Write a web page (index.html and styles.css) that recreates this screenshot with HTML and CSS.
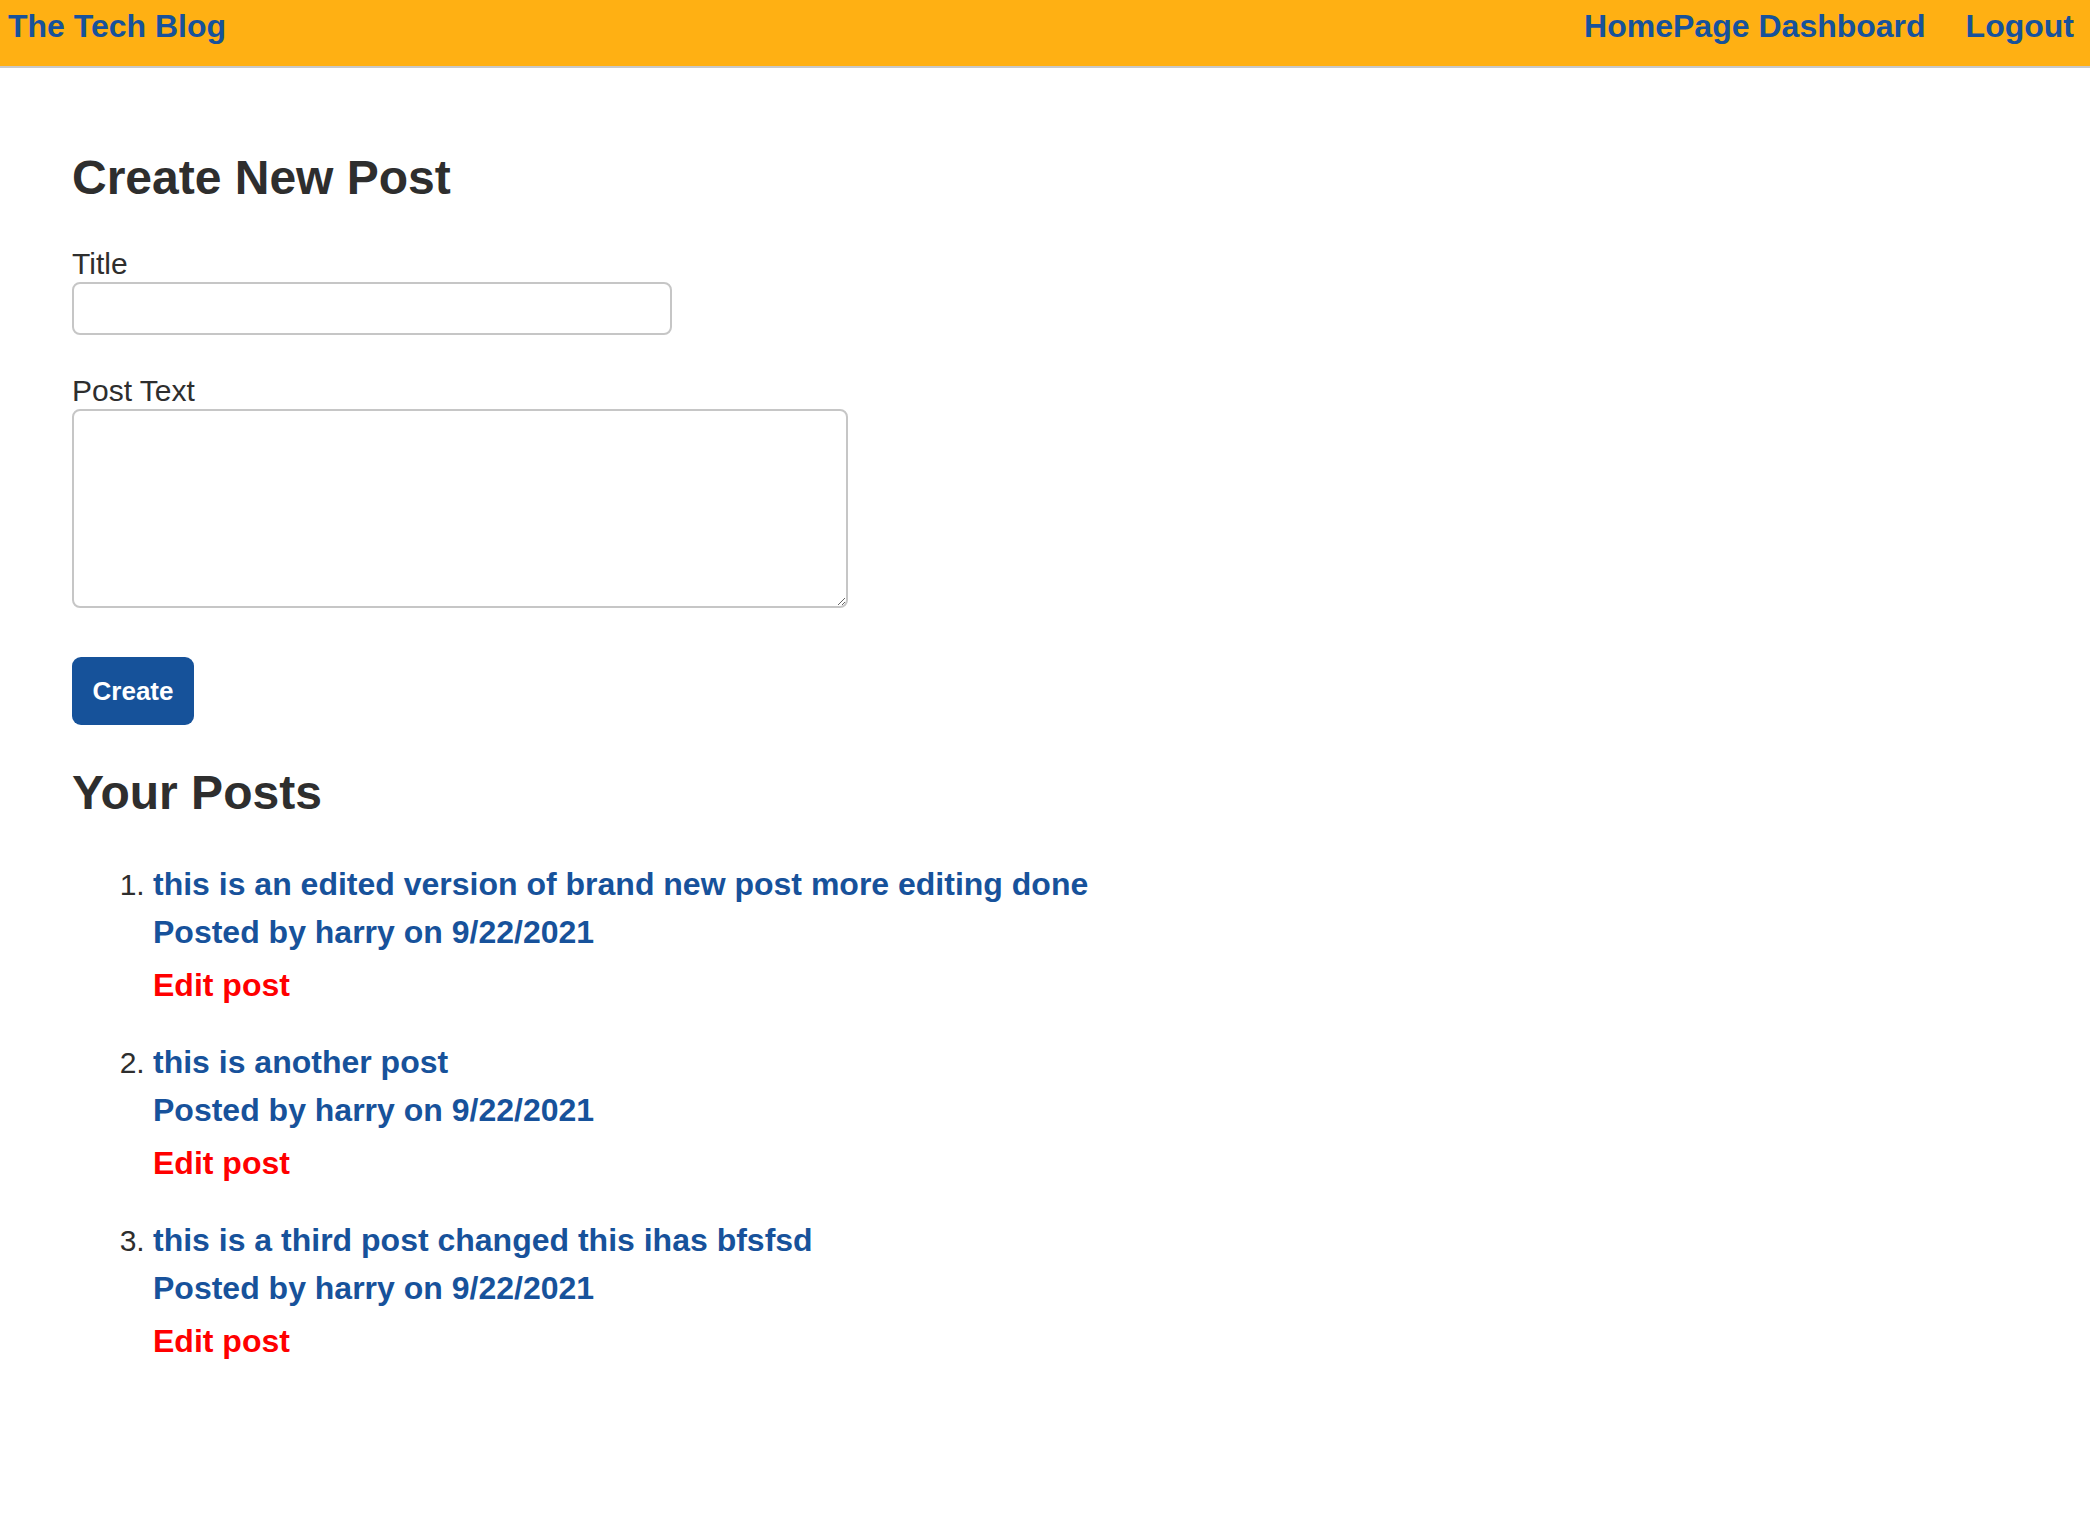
FILE: index.html
```html
<!DOCTYPE html>
<html lang="en">
<head>
<meta charset="utf-8">
<title>The Tech Blog</title>
<link rel="stylesheet" href="styles.css">
</head>
<body>
<header class="site-header">
  <a class="brand" href="#">The Tech Blog</a>
  <nav class="nav">
    <a class="nav-link" href="#">HomePage</a>
    <a class="nav-link" href="#">Dashboard</a>
    <a class="nav-link nav-logout" href="#">Logout</a>
  </nav>
</header>
<main class="main">
  <h2 class="section-title section-title-first">Create New Post</h2>
  <form class="post-form">
    <label class="field-label" for="title">Title</label>
    <input class="field-input" id="title" type="text">
    <label class="field-label" for="body">Post Text</label>
    <textarea class="field-textarea" id="body"></textarea>
    <button class="btn-create" type="button">Create</button>
  </form>
  <h2 class="section-title">Your Posts</h2>
  <ol class="post-list">
    <li class="post-item">
      <a class="post-title" href="#">this is an edited version of brand new post more editing done</a>
      <a class="post-meta" href="#">Posted by harry on 9/22/2021</a>
      <a class="post-edit" href="#">Edit post</a>
    </li>
    <li class="post-item">
      <a class="post-title" href="#">this is another post</a>
      <a class="post-meta" href="#">Posted by harry on 9/22/2021</a>
      <a class="post-edit" href="#">Edit post</a>
    </li>
    <li class="post-item">
      <a class="post-title" href="#">this is a third post changed this ihas bfsfsd</a>
      <a class="post-meta" href="#">Posted by harry on 9/22/2021</a>
      <a class="post-edit" href="#">Edit post</a>
    </li>
  </ol>
</main>
</body>
</html>
```

FILE: styles.css
```css
html, body {
  margin: 0;
  padding: 0;
  background: #ffffff;
}

body {
  font-family: "Liberation Sans", Arial, Helvetica, sans-serif;
  font-size: 30px;
  color: #2e2e2e;
}

a {
  text-decoration: none;
}

.site-header {
  display: flex;
  justify-content: space-between;
  align-items: flex-start;
  box-sizing: border-box;
  height: 68px;
  padding: 8px 16px 0 8px;
  background: #ffb013;
  border-bottom: 2px solid #c9c9c9;
}

.brand,
.nav-link {
  font-size: 32px;
  font-weight: bold;
  color: #17529b;
  line-height: normal;
}

.nav {
  display: flex;
  gap: 9px;
}

.nav-logout {
  margin-left: 31px;
}

.main {
  padding: 0 0 0 72px;
}

.section-title {
  font-size: 48px;
  font-weight: bold;
  line-height: normal;
  color: #2e2e2e;
  margin: 40px 0 0 0;
}

.section-title-first {
  margin-top: 82px;
}

.post-form {
  margin-top: 42px;
  display: flex;
  flex-direction: column;
  align-items: flex-start;
}

.field-label {
  display: block;
  font-size: 30px;
  line-height: normal;
  margin-bottom: 1px;
}

.field-input {
  display: block;
  box-sizing: border-box;
  width: 600px;
  height: 53px;
  border: 2px solid #c6c6c6;
  border-radius: 8px;
  margin: 0 0 39px 0;
  font-size: 24px;
  font-family: inherit;
  padding: 4px 10px;
  background: #fff;
}

.field-textarea {
  display: block;
  box-sizing: border-box;
  width: 776px;
  height: 199px;
  border: 2px solid #c6c6c6;
  border-radius: 8px;
  margin: 0;
  font-size: 24px;
  font-family: inherit;
  padding: 6px 10px;
  background: #fff;
}

.btn-create {
  margin-top: 49px;
  box-sizing: border-box;
  width: 122px;
  height: 68px;
  padding: 0 20px;
  border: none;
  border-radius: 9px;
  background: #16529a;
  color: #ffffff;
  font-family: inherit;
  font-size: 26px;
  font-weight: bold;
}

.post-list {
  margin: 40px 0 0 0;
  padding: 0 0 0 81px;
}

.post-item {
  font-size: 30px;
  margin-bottom: 29px;
}

.post-title,
.post-meta,
.post-edit {
  display: block;
  font-size: 32px;
  font-weight: bold;
  line-height: 48px;
  color: #17529b;
}

.post-edit {
  margin-top: 5px;
  color: #ff0000;
}
```
